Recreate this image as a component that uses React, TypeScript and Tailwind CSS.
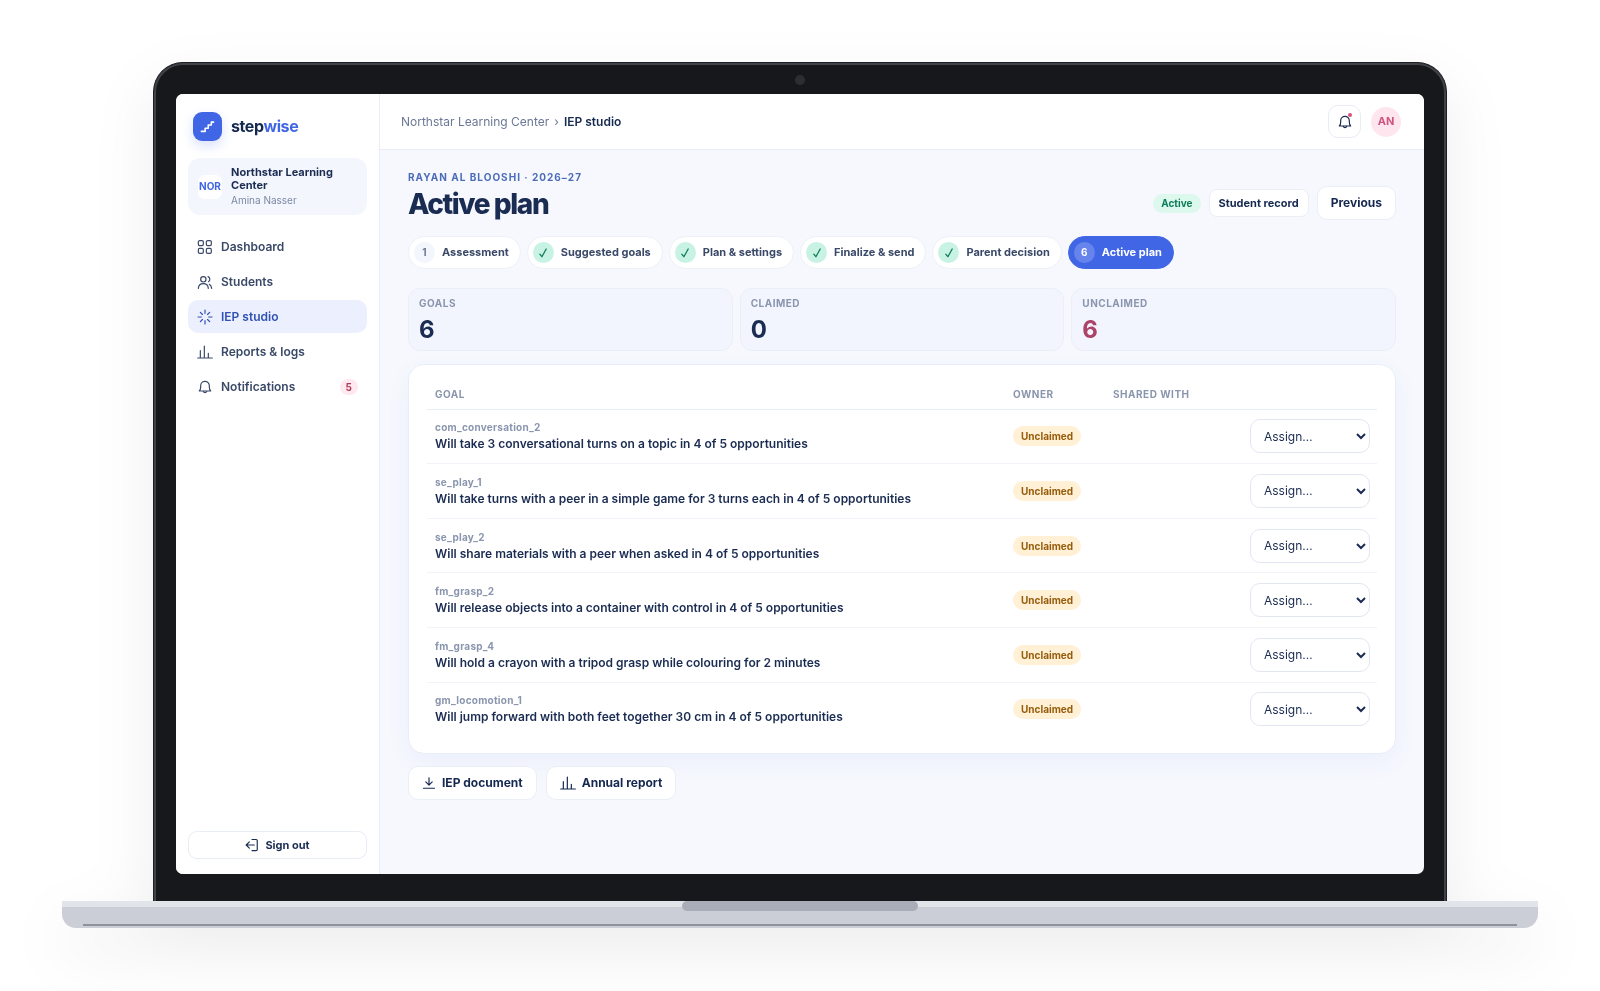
import type React from 'react';

interface Step {
  label: string;
  state: 'todo' | 'done' | 'current';
}

interface Goal {
  code: string;
  text: string;
}

const steps: Step[] = [
  { label: 'Assessment', state: 'todo' },
  { label: 'Suggested goals', state: 'done' },
  { label: 'Plan & settings', state: 'done' },
  { label: 'Finalize & send', state: 'done' },
  { label: 'Parent decision', state: 'done' },
  { label: 'Active plan', state: 'current' },
];

const goals: Goal[] = [
  { code: 'com_conversation_2', text: 'Will take 3 conversational turns on a topic in 4 of 5 opportunities' },
  { code: 'se_play_1', text: 'Will take turns with a peer in a simple game for 3 turns each in 4 of 5 opportunities' },
  { code: 'se_play_2', text: 'Will share materials with a peer when asked in 4 of 5 opportunities' },
  { code: 'fm_grasp_2', text: 'Will release objects into a container with control in 4 of 5 opportunities' },
  { code: 'fm_grasp_4', text: 'Will hold a crayon with a tripod grasp while colouring for 2 minutes' },
  { code: 'gm_locomotion_1', text: 'Will jump forward with both feet together 30 cm in 4 of 5 opportunities' },
];

function Icon({ children, className }: { children: React.ReactNode; className?: string }) {
  return (
    <svg
      viewBox="0 0 24 24"
      fill="none"
      stroke="currentColor"
      strokeWidth="1.8"
      strokeLinecap="round"
      strokeLinejoin="round"
      aria-hidden="true"
      className={`shrink-0 ${className ?? 'size-4'}`}
    >
      {children}
    </svg>
  );
}

function DashboardIcon() {
  return (
    <Icon>
      <rect x="2" y="2.5" width="7.5" height="7.5" rx="2" />
      <rect x="14" y="2.5" width="7.5" height="7.5" rx="2" />
      <rect x="2" y="14" width="7.5" height="7.5" rx="2" />
      <rect x="14" y="14" width="7.5" height="7.5" rx="2" />
    </Icon>
  );
}

function StudentsIcon() {
  return (
    <Icon>
      <circle cx="9.5" cy="8" r="4" />
      <path d="M2 21.500c.4-4.700 3.300-7 7.500-7s7.100 2.300 7.500 7" />
      <path d="M16.500 4a4.200 4.200 0 0 1 .8 7.500" />
      <path d="M18.500 15.500c2 1.200 3.100 3.200 3.500 6" />
    </Icon>
  );
}

function StudioIcon() {
  return (
    <Icon>
      <path d="M12 1.500v5M12 17.500v5M1.500 12h5M17.500 12h5M5 5l3.200 3.200M15.800 15.800 19 19M5 19l3.200-3.200M15.800 8.200 19 5" />
    </Icon>
  );
}

function ChartIcon() {
  return (
    <Icon>
      <path d="M1 21h22M5 21V10M11 21V3M17 21v-7" />
    </Icon>
  );
}

function BellIcon() {
  return (
    <Icon>
      <path d="M3.500 18h17c-1.500-1.500-2-3-2-5.500V10a6.500 6.500 0 0 0-13 0v2.500c0 2.500-.5 4-2 5.500Z" />
      <path d="M9.500 18.500a2.600 2.600 0 0 0 5 0" />
    </Icon>
  );
}

function DownloadIcon() {
  return (
    <Icon className="size-[14px]">
      <path d="M12 3v12M6.500 10l5.500 5.500 5.500-5.500M2.500 21h19" strokeWidth="2" />
    </Icon>
  );
}

function SignOutIcon() {
  return (
    <Icon className="size-[14px]">
      <path d="M12 2.500h7a2 2 0 0 1 2 2v15a2 2 0 0 1-2 2h-7M16 12H2M7.500 6.500 2 12l5.500 5.500" strokeWidth="2" />
    </Icon>
  );
}

function CheckIcon() {
  return (
    <svg viewBox="0 0 10 10" fill="none" stroke="currentColor" className="size-[10px]" aria-hidden="true">
      <path d="M1.800 6.200 3.900 8.700 8.200 1" strokeWidth="1.300" strokeLinecap="round" strokeLinejoin="round" />
    </svg>
  );
}

function NavItem({ icon, label, active, count }: { icon: React.ReactNode; label: string; active?: boolean; count?: number }) {
  return (
    <a
      href="#"
      aria-current={active ? 'page' : undefined}
      className={`flex h-[33px] items-center gap-2 rounded-[10px] px-[9px] text-xs font-semibold ${
        active ? 'bg-[#ecf0fe] text-[#2f50b4]' : 'text-[#3a4968]'
      }`}
    >
      {icon}
      {label}
      {count !== undefined && (
        <span className="ml-auto rounded-full bg-[#ffe8ef] px-[6px] text-[10px] leading-4 font-bold text-[#b0395c]">{count}</span>
      )}
    </a>
  );
}

function Sidebar() {
  return (
    <aside className="flex w-[204px] shrink-0 flex-col border-r border-[#e8edf8] bg-white px-3 pb-[15px] pt-[18px]">
      <div className="flex items-center gap-[9px] pl-[5px]">
        <span className="flex size-[29px] items-center justify-center rounded-[9px] bg-[#4066e6] text-white shadow-[0_5px_12px_rgba(65,105,233,0.2)]">
          <svg viewBox="0 0 16 16" fill="none" stroke="currentColor" strokeWidth="1.700" className="size-[15px]" aria-hidden="true">
            <path d="M1.500 13.200h4V9.800h3.300V6.400h3.300V3.300h2.400" strokeLinejoin="round" strokeLinecap="round" />
          </svg>
        </span>
        <span className="pb-[2px] text-base leading-6 font-bold tracking-tight text-[#142850]">
          step<span className="text-[#4066e6]">wise</span>
        </span>
      </div>

      <div className="mt-[17px] flex items-center gap-[9px] rounded-xl bg-[#f3f6fd] py-2 pl-[10px] pr-3">
        <span className="flex size-6 shrink-0 items-center justify-center rounded-[7px] bg-white text-[10px] font-bold text-[#4066e6]">
          NOR
        </span>
        <div>
          <p className="text-[11px] leading-[13px] font-bold text-[#1b2c52]">Northstar Learning Center</p>
          <p className="mt-px text-[10px] leading-[14px] text-[#7c88a4]">Amina Nasser</p>
        </div>
      </div>

      <nav className="mt-[15px] flex flex-col gap-[2px]">
        <NavItem icon={<DashboardIcon />} label="Dashboard" />
        <NavItem icon={<StudentsIcon />} label="Students" />
        <NavItem icon={<StudioIcon />} label="IEP studio" active />
        <NavItem icon={<ChartIcon />} label="Reports & logs" />
        <NavItem icon={<BellIcon />} label="Notifications" count={5} />
      </nav>

      <button
        type="button"
        className="mt-auto flex h-7 items-center justify-center gap-[6px] rounded-[9px] border border-[#e8ecf5] bg-white text-[11px] font-bold text-[#1b2c52]"
      >
        <SignOutIcon />
        Sign out
      </button>
    </aside>
  );
}

function TopBar() {
  return (
    <header className="flex h-14 items-center justify-between border-b border-[#e8edf8] bg-white pl-[21px] pr-[23px]">
      <div className="flex items-center gap-[5px] text-xs">
        <a href="#" className="text-[#6b7896]">
          Northstar Learning Center
        </a>
        <span className="text-[#6b7896]">›</span>
        <span className="font-semibold text-[#142850]">IEP studio</span>
      </div>
      <div className="flex items-center gap-[10px]">
        <button
          type="button"
          aria-label="Notifications"
          className="relative flex size-[33px] items-center justify-center rounded-[10px] border border-[#e8ecf5] bg-white text-[#1b2c52]"
        >
          <BellIcon />
          <span className="absolute right-2 top-[7px] size-1 rounded-full bg-[#d9507a]" />
        </button>
        <span className="flex size-[30px] items-center justify-center rounded-full bg-[#ffe6ee] text-[11px] font-bold text-[#cc5580]">
          AN
        </span>
      </div>
    </header>
  );
}

function StepPill({ step, index }: { step: Step; index: number }) {
  const current = step.state === 'current';
  const markClass = {
    todo: 'bg-[#f3f6fd] text-[#6b7896]',
    done: 'bg-[#c8f2e3] text-[#0f7d59]',
    current: 'bg-white/20 text-white',
  }[step.state];

  return (
    <button
      type="button"
      aria-current={current ? 'step' : undefined}
      className={`flex h-[33px] items-center gap-[7px] rounded-full border pl-[5px] pr-[11px] text-[11px] font-bold ${
        current ? 'border-[#4066e6] bg-[#4066e6] text-white' : 'border-[#edf0f8] bg-white text-[#3a4968]'
      }`}
    >
      <span className={`flex size-[21px] items-center justify-center rounded-full text-[10px] font-bold ${markClass}`}>
        {step.state === 'done' ? <CheckIcon /> : index + 1}
      </span>
      {step.label}
    </button>
  );
}

function StatCard({ label, value, valueClass }: { label: string; value: number; valueClass: string }) {
  return (
    <div className="rounded-xl border border-[#eaeef6] bg-[#f2f5fd] px-[10px] pb-[5px] pt-[7px]">
      <p className="text-[10px] leading-[14px] font-bold tracking-wider text-[#8a95ae]">{label}</p>
      <p className={`mt-[5px] text-2xl leading-[30px] font-bold ${valueClass}`}>{value}</p>
    </div>
  );
}

function GoalTable() {
  return (
    <div className="mt-[13px] rounded-2xl border border-[#e8edf8] bg-white px-[18px] pb-[17px] pt-[15px] shadow-[0_8px_24px_rgba(65,105,233,0.06)]">
      <table className="h-[356px] w-full border-collapse text-left">
        <thead className="text-[10px] tracking-wider text-[#8a95ae]">
          <tr className="h-[29px] border-b border-[#e8edf5]">
            <th className="px-2 font-bold">GOAL</th>
            <th className="w-[100px] px-[7px] font-bold">OWNER</th>
            <th className="w-[137px] px-[7px] font-bold">SHARED WITH</th>
            <th className="w-[134px] px-[7px]" aria-label="Assign" />
          </tr>
        </thead>
        <tbody>
          {goals.map((goal) => (
            <tr key={goal.code} className="border-b border-[#f0f3f8] last:border-b-0">
              <td className="px-2">
                <p className="text-[10px] leading-[14px] font-bold tracking-wide text-[#8a95ae]">{goal.code}</p>
                <p className="mt-[2px] text-xs leading-4 font-semibold text-[#1b2c52]">{goal.text}</p>
              </td>
              <td className="px-[7px]">
                <span className="block w-fit rounded-full bg-[#fff0d6] px-2 text-[10px] leading-5 font-bold text-[#965d0c]">
                  Unclaimed
                </span>
              </td>
              <td className="px-[7px]" />
              <td className="px-[7px]">
                <select
                  aria-label={`Assign ${goal.code}`}
                  className="block h-[34px] w-full rounded-[10px] border border-[#e2e6f1] bg-white pl-[9px] text-xs text-[#1b2c52]"
                >
                  <option>Assign…</option>
                </select>
              </td>
            </tr>
          ))}
        </tbody>
      </table>
    </div>
  );
}

function ActionButton({ icon, children }: { icon?: React.ReactNode; children: string }) {
  return (
    <button
      type="button"
      className="flex h-[34px] items-center gap-[6px] rounded-[10px] border border-[#eaeef6] bg-white px-[13px] text-xs font-bold text-[#142850]"
    >
      {icon}
      {children}
    </button>
  );
}

function PlanPage() {
  return (
    <main className="flex-1 px-7 pt-5">
      <div className="flex items-end justify-between">
        <div>
          <p className="text-[10px] leading-[14px] font-bold tracking-widest text-[#4b6cb7]">RAYAN AL BLOOSHI · 2026–27</p>
          <h1 className="mt-1 text-[28px] leading-8 font-extrabold tracking-tighter text-[#1b2c52]">Active plan</h1>
        </div>
        <div className="flex items-center gap-2">
          <span className="rounded-full bg-[#ddf8ed] px-2 text-[10px] leading-[19px] font-bold text-[#0f7d59]">Active</span>
          <button
            type="button"
            className="h-7 rounded-[8px] border border-[#eaeef6] bg-white px-[9px] text-[11px] font-bold text-[#142850]"
          >
            Student record
          </button>
          <ActionButton>Previous</ActionButton>
        </div>
      </div>

      <div className="mt-4 flex gap-[6px]">
        {steps.map((step, index) => (
          <StepPill key={step.label} step={step} index={index} />
        ))}
      </div>

      <div className="mt-[19px] grid grid-cols-3 gap-[7px]">
        <StatCard label="GOALS" value={6} valueClass="text-[#1b2c52]" />
        <StatCard label="CLAIMED" value={0} valueClass="text-[#1b2c52]" />
        <StatCard label="UNCLAIMED" value={6} valueClass="text-[#ac4369]" />
      </div>

      <GoalTable />

      <div className="mt-3 flex gap-[9px]">
        <ActionButton icon={<DownloadIcon />}>IEP document</ActionButton>
        <ActionButton icon={<ChartIcon />}>Annual report</ActionButton>
      </div>
    </main>
  );
}

export default function App() {
  return (
    <div className="min-h-screen overflow-hidden bg-white px-[62px] pb-16 pt-[62px] font-['Inter',sans-serif]">
      <div className="drop-shadow-[0_24px_30px_rgba(0,0,0,0.07)]">
        <div className="mx-[91px] rounded-t-[30px] border-x border-t border-[#1c1e23] bg-[#17181c]">
          <div className="rounded-t-[29px] border-x-2 border-t-2 border-[#3f4248] px-5 pb-[27px]">
            <div className="flex h-[29px] items-center justify-center">
              <span className="size-[10px] rounded-full bg-[#2c2e34]" />
            </div>
            <div className="flex aspect-[16/10] overflow-hidden rounded-[7px] bg-[#f6f8fd]">
              <Sidebar />
              <div className="flex min-w-0 flex-1 flex-col">
                <TopBar />
                <PlanPage />
              </div>
            </div>
          </div>
        </div>
        <div className="flex h-[27px] flex-col items-center justify-between rounded-b-[14px] bg-linear-to-b from-[#e1e4e9] from-[6px] to-[#cbced7] to-[6px] pb-[2px]">
          <div className="h-[10px] w-[16%] rounded-[5px] bg-[#a8adb7]" />
          <div className="h-[2px] w-[calc(100%-42px)] bg-[#8e929c]" />
        </div>
      </div>
    </div>
  );
}
